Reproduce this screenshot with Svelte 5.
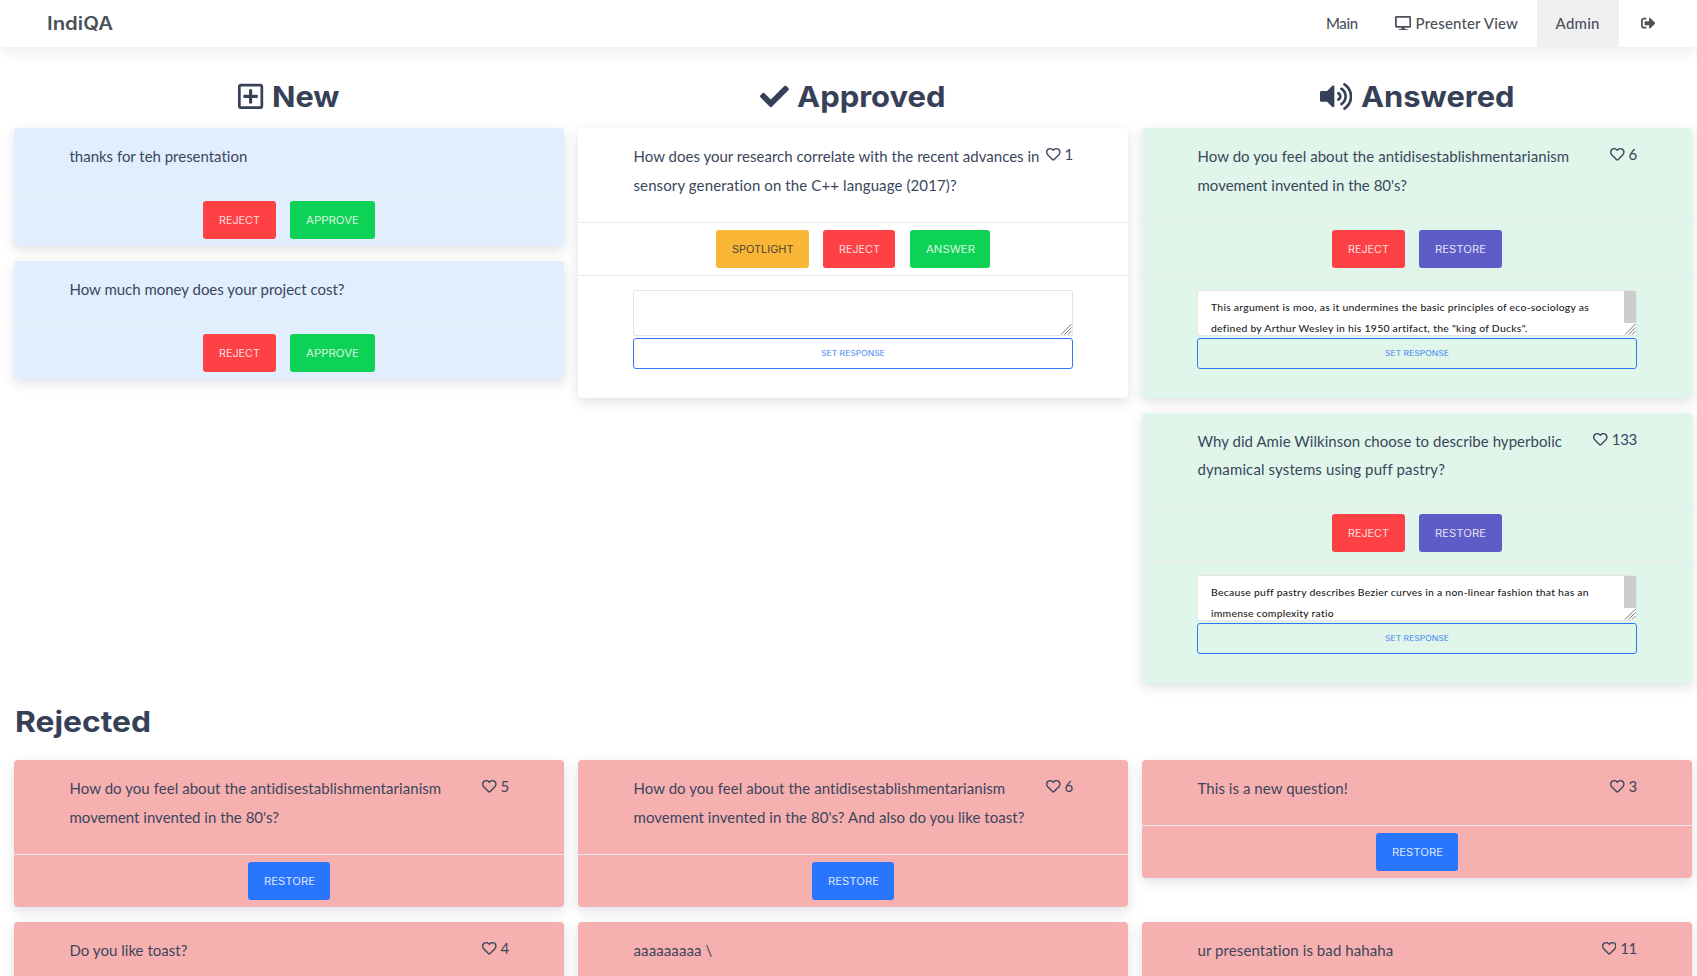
<script>
  const icons = {
    plus: { w: 448, d: 'M352 240v32c0 6.6-5.4 12-12 12h-88v88c0 6.6-5.4 12-12 12h-32c-6.6 0-12-5.4-12-12v-88h-88c-6.6 0-12-5.4-12-12v-32c0-6.6 5.4-12 12-12h88v-88c0-6.6 5.4-12 12-12h32c6.6 0 12 5.4 12 12v88h88c6.6 0 12 5.4 12 12zm96-160v352c0 26.5-21.5 48-48 48H48c-26.5 0-48-21.5-48-48V80c0-26.5 21.5-48 48-48h352c26.5 0 48 21.5 48 48zm-48 346V86c0-3.3-2.7-6-6-6H54c-3.3 0-6 2.7-6 6v340c0 3.3 2.7 6 6 6h340c3.3 0 6-2.7 6-6z' },
    check: { w: 512, d: 'M173.898 439.404l-166.4-166.4c-9.997-9.997-9.997-26.206 0-36.204l36.203-36.204c9.997-9.998 26.207-9.998 36.204 0L192 312.69 432.095 72.596c9.997-9.997 26.207-9.997 36.204 0l36.203 36.204c9.997 9.997 9.997 26.206 0 36.204l-294.4 294.401c-9.998 9.997-26.207 9.997-36.204-.001z' },
    volume: { w: 576, d: 'M215.03 71.05L126.06 160H24c-13.26 0-24 10.74-24 24v144c0 13.25 10.74 24 24 24h102.06l88.97 88.95c15.03 15.03 40.97 4.47 40.97-16.97V88.02c0-21.46-25.96-31.98-40.97-16.97zm233.32-51.08c-11.17-7.33-26.18-4.24-33.51 6.95-7.34 11.17-4.22 26.18 6.95 33.51 66.27 43.49 105.82 116.6 105.82 195.58 0 78.98-39.55 152.09-105.82 195.58-11.17 7.32-14.29 22.34-6.95 33.5 7.04 10.71 21.93 14.56 33.51 6.95C528.27 439.58 576 351.33 576 256S528.27 72.43 448.35 19.97zM480 256c0-63.53-32.06-121.94-85.77-156.24-11.19-7.14-26.03-3.82-33.12 7.46s-3.78 26.21 7.41 33.36C408.27 165.97 432 209.11 432 256s-23.73 90.02-63.48 115.42c-11.19 7.14-14.5 22.07-7.41 33.36 6.51 10.36 21.12 15.14 33.12 7.46C447.94 377.94 480 319.54 480 256zm-141.77-76.87c-11.58-6.33-26.19-2.16-32.61 9.45-6.39 11.61-2.16 26.2 9.45 32.61C327.98 228.28 336 241.63 336 256c0 14.38-8.02 27.72-20.92 34.81-11.61 6.41-15.84 21-9.45 32.61 6.43 11.66 21.05 15.8 32.61 9.45 28.23-15.55 45.77-45 45.77-76.88s-17.54-61.32-45.78-76.86z' },
    heart: { w: 512, d: 'M458.4 64.3C400.6 15.7 311.3 23 256 79.3 200.7 23 111.4 15.6 53.6 64.3-21.6 127.6-10.6 230.8 43 285.5l175.4 178.7c10 10.2 23.4 15.9 37.6 15.9 14.3 0 27.6-5.6 37.6-15.8L469 285.6c53.5-54.7 64.7-157.9-10.6-221.3zm-23.6 187.5L259.4 430.5c-2.4 2.4-4.4 2.4-6.8 0L77.2 251.8c-36.5-37.2-43.9-107.6 7.3-150.7 38.9-32.7 98.9-27.8 136.5 10.5l35 35.7 35-35.7c37.8-38.5 97.8-43.2 136.5-10.6 51.1 43.1 43.5 113.9 7.3 150.8z' },
    desktop: { w: 576, d: 'M528 0H48C21.5 0 0 21.5 0 48v320c0 26.5 21.5 48 48 48h192l-16 48h-72c-13.3 0-24 10.7-24 24s10.7 24 24 24h272c13.3 0 24-10.7 24-24s-10.7-24-24-24h-72l-16-48h192c26.5 0 48-21.5 48-48V48c0-26.5-21.5-48-48-48zm-16 352H64V64h448v288z' },
    signout: { w: 512, d: 'M497 273L329 441c-15 15-41 4.5-41-17v-96H152c-13.3 0-24-10.7-24-24v-96c0-13.3 10.7-24 24-24h136V88c0-21.4 25.9-32 41-17l168 168c9.3 9.4 9.3 24.6 0 34zM192 436v-40c0-6.6-5.4-12-12-12H96c-17.7 0-32-14.3-32-32V160c0-17.7 14.3-32 32-32h84c6.6 0 12-5.4 12-12V76c0-6.6-5.4-12-12-12H96c-53 0-96 43-96 96v192c0 53 43 96 96 96h84c6.6 0 12-5.4 12-12z' }
  };

  const reject = { label: 'Reject', kind: 'danger', w: 41 };
  const approve = { label: 'Approve', kind: 'success', w: 53 };
  const answer = { label: 'Answer', kind: 'success', w: 49 };
  const spotlight = { label: 'Spotlight', kind: 'warning', w: 61.5 };
  const unanswer = { label: 'Restore', kind: 'purple', w: 51 };
  const restore = { label: 'Restore', kind: 'primary', w: 51 };

  // Each line is [text, measure in px]
  const antidis = ['How do you feel about the antidisestablishmentarianism', 372];

  const columns = [
    {
      title: 'New', icon: 'plus', w: 67.5, tone: 'new', cards: [
        { lines: [['thanks for teh presentation', 178]], actions: [reject, approve] },
        { lines: [['How much money does your project cost?', 275]], actions: [reject, approve] }
      ]
    },
    {
      title: 'Approved', icon: 'check', w: 148.5, tone: 'approved', cards: [
        { lines: [['How does your research correlate with the recent advances in', 406], ['sensory generation on the C++ language (2017)?', 323.5]], likes: 1, actions: [spotlight, reject, answer], response: [] }
      ]
    },
    {
      title: 'Answered', icon: 'volume', w: 153.5, tone: 'answered', cards: [
        {
          lines: [antidis, ["movement invented in the 80's?", 209.5]], likes: 6, actions: [reject, unanswer],
          response: [['This argument is moo, as it undermines the basic principles of eco-sociology as', 378], ['defined by Arthur Wesley in his 1950 artifact, the "king of Ducks".', 316.5]]
        },
        {
          lines: [['Why did Amie Wilkinson choose to describe hyperbolic', 364.5], ['dynamical systems using puff pastry?', 247]], likes: 133, actions: [reject, unanswer],
          response: [['Because puff pastry describes Bezier curves in a non-linear fashion that has an', 377.5], ['immense complexity ratio', 123]]
        }
      ]
    }
  ];

  const rejected = [
    { lines: [antidis, ["movement invented in the 80's?", 209.5]], likes: 5, actions: [restore] },
    { lines: [antidis, ["movement invented in the 80's? And also do you like toast?", 391]], likes: 6, actions: [restore] },
    { lines: [['This is a new question!', 150.5]], likes: 3, actions: [restore] },
    { lines: [['Do you like toast?', 118]], likes: 4, actions: [] },
    { lines: [['aaaaaaaaa \\', 79]], actions: [] },
    { lines: [['ur presentation is bad hahaha', 196]], likes: 11, actions: [] }
  ];

  // Tracks a line of text so that it fills its measure exactly.
  function fit(node, width) {
    const natural = node.getBoundingClientRect().width;
    const n = node.textContent.length;
    node.style.letterSpacing = `${((width - natural) / n).toFixed(4)}px`;
  }

  // Widens the letterforms themselves, for headings and button labels.
  function expand(node, width) {
    const natural = node.getBoundingClientRect().width;
    node.style.transform = `scaleX(${(width / natural).toFixed(4)})`;
    node.style.marginRight = `${(width - natural).toFixed(3)}px`;
  }
</script>

{#snippet icon(name)}
  <svg class="icon" viewBox="0 0 {icons[name].w} 512" style="width: {icons[name].w / 512}em" aria-hidden="true"><path d={icons[name].d} /></svg>
{/snippet}

{#snippet line(text, width)}
  <span class="line" use:fit={width}>{text}</span>
{/snippet}

{#snippet wide(text, width)}
  <span class="line wide" use:expand={width}>{text}</span>
{/snippet}

{#snippet card(c, tone)}
  <article class="card {tone}">
    <div class="question">
      <p class="text">
        {#each c.lines as [t, w]}{@render line(t, w)}{/each}
      </p>
      {#if c.likes}
        <span class="likes">{@render icon('heart')}{@render line(c.likes, String(c.likes).length * 8.4)}</span>
      {/if}
    </div>
    <div class="actions">
      {#each c.actions as a}
        <button class="btn {a.kind}">{@render wide(a.label.toUpperCase(), a.w)}</button>
      {/each}
    </div>
    {#if c.response}
      <div class="response">
        <div class="area">
          {#each c.response as [t, w]}{@render line(t, w)}{/each}
          {#if c.response.length}<i class="thumb"></i>{/if}
          <svg class="grip" viewBox="0 0 12 12"><path d="M1 11.500L11.500 1M4.500 11.500l7-7M8 11.500l3.500-3.500" /></svg>
        </div>
        <button class="set">{@render wide('SET RESPONSE', 64)}</button>
      </div>
    {/if}
  </article>
{/snippet}

<div class="page">
  <header>
    <span class="brand">{@render wide('IndiQA', 66)}</span>
    <nav>
      <span class="item">{@render line('Main', 32)}</span>
      <span class="item">{@render icon('desktop')}{@render line('Presenter View', 102.5)}</span>
      <span class="item active">{@render line('Admin', 44)}</span>
      <span class="item out">{@render icon('signout')}</span>
    </nav>
  </header>

  <main class="board">
    {#each columns as col}
      <section class="column">
        <h1>{@render icon(col.icon)}{@render wide(col.title, col.w)}</h1>
        <div class="stack">
          {#each col.cards as c}{@render card(c, col.tone)}{/each}
        </div>
      </section>
    {/each}
  </main>

  <section class="bin">
    <h1 class="left">{@render wide('Rejected', 136)}</h1>
    <div class="grid">
      {#each rejected as c}{@render card(c, 'rejected')}{/each}
    </div>
  </section>
</div>

<style>
  :global(body) { margin: 0; background: #fff; }
  .page {
    height: 976px;
    overflow: hidden;
    font-family: Lato, 'Open Sans', sans-serif;
    font-size: 14.4px;
    color: #3b465c;
  }
  .line { display: inline-block; white-space: pre; }
  .wide { transform-origin: 0 50%; letter-spacing: 0; }
  .icon { height: 1em; fill: currentColor; flex: none; display: block; }

  header {
    height: 46.5px;
    display: flex;
    justify-content: space-between;
    box-shadow: 0 4px 18px rgba(0, 0, 0, .08);
    color: #4b525a;
  }
  .brand {
    padding-left: 47px;
    font: 600 18px/47.5px Inter, sans-serif;
  }
  nav { display: flex; }
  .item {
    display: flex;
    align-items: center;
    gap: 4.5px;
    padding: 0 18.5px;
    font-weight: 500;
    font-size: 15px;
  }
  .item .icon { font-size: 14.4px; }
  .active { padding: 0 19px; background: #f0f0f0; }
  .out { padding: 0 42px 0 22px; }

  .board, .grid {
    display: grid;
    grid-template-columns: repeat(3, 550px);
    column-gap: 14px;
    padding-left: 14px;
  }
  h1 {
    margin: 0;
    display: flex;
    align-items: center;
    justify-content: center;
    gap: 8.5px;
    height: 36px;
    font: 700 29px/36px Inter, sans-serif;
    color: #364057;
  }
  h1 .icon { font-size: 28.8px; }
  .board { padding-top: 32px; height: 604px; }
  .stack { display: flex; flex-direction: column; gap: 14.4px; margin-top: 13.6px; }
  .bin h1 { justify-content: flex-start; padding-left: 15px; }
  .bin { padding-top: 21.5px; }
  .grid { margin-top: 20px; row-gap: 14.6px; align-items: start; }

  .card {
    border-radius: 4px;
    box-shadow: 0 4px 12px rgba(40, 50, 70, .15);
  }
  .new { background: #e1eefe; }
  .approved { background: #fff; }
  .answered { background: #e0f6ea; }
  .rejected { background: #f7b0b0; }

  .question {
    display: flex;
    justify-content: space-between;
    padding: 14px 55px 22px;
  }
  .text { margin: 0; display: flex; flex-direction: column; align-items: flex-start; line-height: 28.8px; font-size: 15px; padding-left: .5px; }
  .likes { display: flex; align-items: center; gap: 4px; height: 24.6px; font-size: 15px; }
  .likes .icon { font-size: 14.6px; }

  .actions {
    display: flex;
    justify-content: center;
    gap: 14.2px;
    border-top: 1px solid #e9ecef;
    padding: 7.2px 0;
  }
  .btn {
    height: 38px;
    padding: 0 15.5px 0 16px;
    border: 0;
    border-radius: 3px;
    font: 400 10px/38px Inter, sans-serif;
    color: rgba(255, 255, 255, .85);
  }
  .danger { background: #fd4145; }
  .success { background: #0ed255; }
  .warning { background: #fab636; color: #4b4432; }
  .purple { background: #5e5cc7; }
  .primary { background: #2a75fd; }

  .response {
    display: flex;
    flex-direction: column;
    gap: 2.5px;
    border-top: 1px solid #e9ecef;
    padding: 14.4px 55px 28.8px;
  }
  .area {
    position: relative;
    box-sizing: border-box;
    height: 45.5px;
    padding: 6px 13px;
    border: 1px solid #e3e6e9;
    border-radius: 2px;
    background: #fff;
    overflow: hidden;
    display: flex;
    flex-direction: column;
    align-items: flex-start;
    font-size: 10.4px;
    line-height: 21px;
    color: #1c1c1c;
    font-weight: 500;
  }
  .thumb { position: absolute; right: 0; top: 0; width: 12px; height: 32px; background: #cdcdcd; }
  .grip { position: absolute; right: 0; bottom: 0; width: 12px; height: 12px; fill: none; stroke: #777; stroke-width: 1; }
  .set {
    box-sizing: border-box;
    height: 31px;
    padding: 0;
    border: 1px solid #2f78f5;
    border-radius: 3px;
    background: none;
    font: 400 7.2px/28px Inter, sans-serif;
    color: #3f83f3;
  }
</style>
